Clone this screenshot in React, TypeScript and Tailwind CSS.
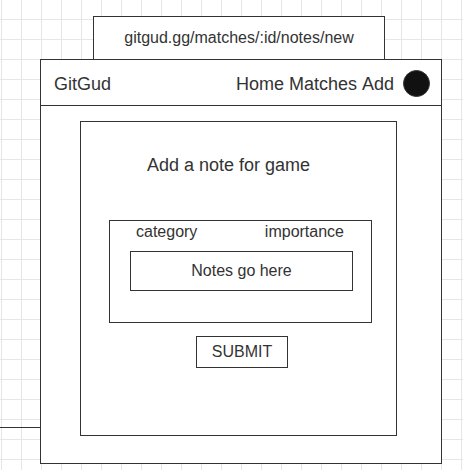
const navLinks = ["Home", "Matches", "Add"];

function UrlBar({ url }: { url: string }) {
  return (
    <div className="ml-[93px] flex h-[43px] w-[292px] items-center justify-center border-x border-t border-[#333] bg-white text-[16px] leading-[18px]">
      {url}
    </div>
  );
}

function Header() {
  return (
    <header className="flex h-[46px] items-center justify-between border-b border-[#333] pl-[13px] pr-[11px] pt-[3px]">
      <span className="text-[18px] leading-[21px]">GitGud</span>
      <div className="flex items-center gap-[9px]">
        <nav className="flex gap-[5px] text-[18px] leading-[21px]">
          {navLinks.map((link) => (
            <span key={link}>{link}</span>
          ))}
        </nav>
        <div className="-mt-[2px] h-[27px] w-[27px] rounded-full border border-[#333] bg-[#111]" />
      </div>
    </header>
  );
}

function NoteForm() {
  return (
    <div className="ml-[39px] mt-[15px] flex h-[315px] w-[317px] flex-col border border-[#333]">
      <h1 className="ml-[66px] mt-[33px] text-[18px] leading-[21px]">Add a note for game</h1>

      <div className="ml-[28px] mt-[44px] h-[103px] w-[263px] border border-[#333]">
        <div className="flex justify-between pl-[26px] pr-[27px] pt-[2px] text-[16px] leading-[18px]">
          <span>category</span>
          <span>importance</span>
        </div>
        <div className="ml-[20px] mt-[10px] flex h-[40px] w-[223px] items-center justify-center border border-[#333] text-[16px] leading-[18px]">
          Notes go here
        </div>
      </div>

      <button
        type="button"
        className="ml-[115px] mt-[13px] flex h-[32px] w-[92px] items-center justify-center border border-[#333] bg-white text-[16px] leading-[18px]"
      >
        SUBMIT
      </button>
    </div>
  );
}

export default function App() {
  return (
    <div className="relative h-[470px] w-full overflow-hidden bg-white pt-[16px] font-['Liberation_Sans',Arial,sans-serif] text-[#333] [background-image:linear-gradient(to_right,#e6e6e6_1px,transparent_1px),linear-gradient(to_bottom,#e6e6e6_1px,transparent_1px)] [background-position:1px_19px] [background-size:20px_20px]">
      <div className="absolute left-0 top-[427px] h-px w-[41px] bg-[#333]" />

      <UrlBar url="gitgud.gg/matches/:id/notes/new" />

      <div className="relative ml-[40px] h-[405px] w-[402px] border border-[#333] bg-white">
        <Header />
        <NoteForm />
      </div>
    </div>
  );
}
